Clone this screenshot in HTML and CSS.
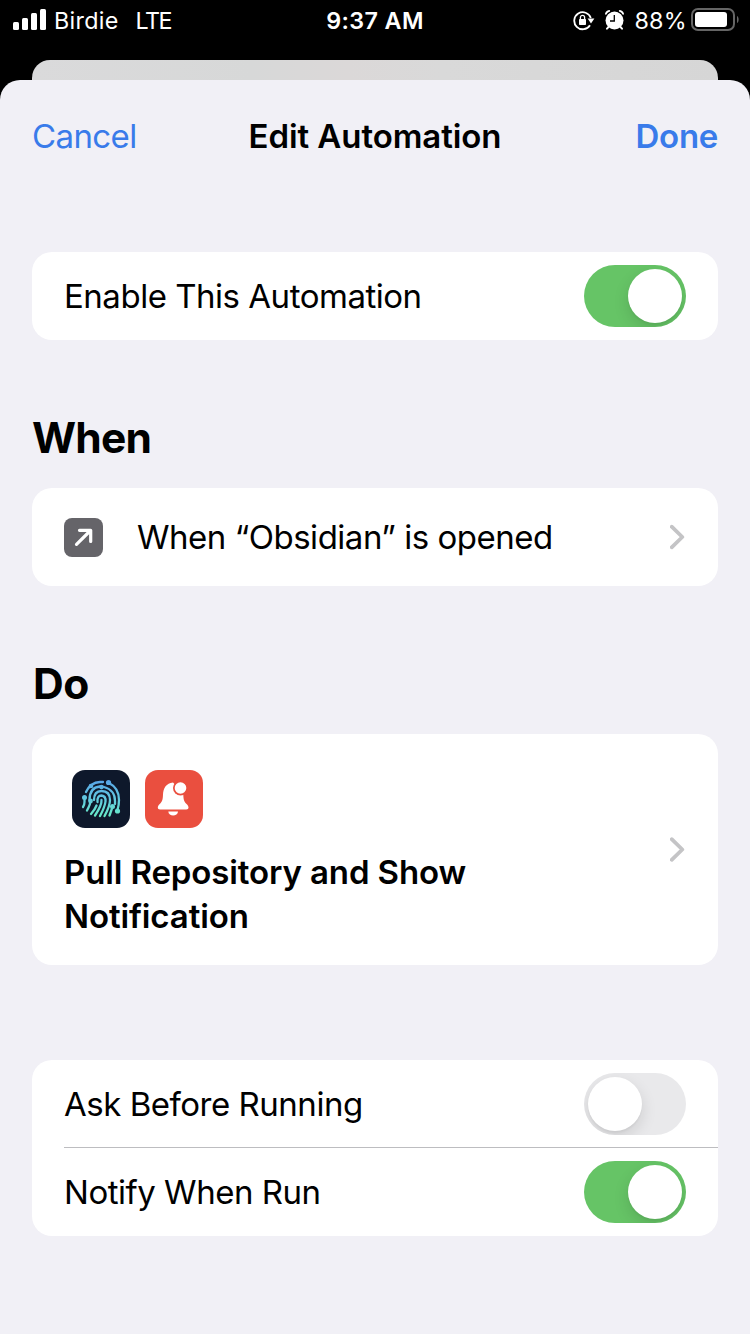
FILE: index.html
```html
<!DOCTYPE html>
<html lang="en">
<head>
<meta charset="utf-8">
<title>Edit Automation</title>
<link rel="stylesheet" href="styles.css">
</head>
<body>
<div class="status">
  <div class="status-left">
    <svg class="signal" width="34" height="22" viewBox="0 0 34 22" fill="#fff"><rect x="0" y="13" width="6" height="8" rx="1.5"/><rect x="9" y="9" width="6" height="12" rx="1.5"/><rect x="18" y="4" width="6" height="17" rx="1.5"/><rect x="27" y="0" width="6" height="21" rx="1.5"/></svg>
    <span class="carrier">Birdie</span><span class="network">LTE</span>
  </div>
  <div class="time">9:37 AM</div>
  <div class="status-right">
    <svg class="lock" width="22" height="22" viewBox="0 0 22 22"><path d="M17 15.200A8.500 8.500 0 1 1 17.800 8" fill="none" stroke="#fff" stroke-width="1.800"/><path d="M14.600 8.500h6.800l-3.400 4.900z" fill="#fff"/><rect x="6" y="9" width="7" height="6" rx=".8" fill="#fff"/><path d="M7.400 9.500V7.400a2.100 2.100 0 0 1 4.200 0v2.100" fill="none" stroke="#fff" stroke-width="1.300"/></svg>
    <svg class="alarm" width="20" height="20" viewBox="0 0 20 20"><circle cx="9.500" cy="10.500" r="9" fill="#fff"/><path d="M1 3.800Q1.600 1.400 4.200 1M18 3.800Q17.400 1.400 14.800 1M3.500 17L2 18.700M15.500 17l1.500 1.700" fill="none" stroke="#fff" stroke-width="1.900" stroke-linecap="round"/><path d="M.8 6.200Q2.800 2.700 6.400 1.300M18.200 6.200Q16.200 2.700 12.600 1.300" fill="none" stroke="#000" stroke-width=".9"/><path d="M9.300 5v6H5" fill="none" stroke="#000" stroke-width="1.300"/></svg>
    <span class="percent">88%</span>
    <svg class="battery" width="49" height="24" viewBox="0 0 49 24"><rect x="1" y="1" width="42" height="21" rx="6" fill="none" stroke="#656565" stroke-width="2"/><rect x="4" y="4" width="32" height="15" rx="3" fill="#fff"/><path d="M46 8c2.200 1 2.200 6 0 7z" fill="#656565"/></svg>
  </div>
</div>
<div class="back-sheet"></div>
<main class="sheet">
  <header class="nav">
    <span class="cancel">Cancel</span><h1 class="title">Edit Automation</h1><span class="done">Done</span>
  </header>
  <section class="card row enable">
    <span class="label l-enable">Enable This Automation</span><span class="toggle on"></span>
  </section>
  <h2 class="heading h-when">When</h2>
  <section class="card row when">
    <svg class="open-icon" width="39" height="39" viewBox="0 0 39 39"><rect width="39" height="39" rx="8" fill="#656469"/><path d="M12.500 26.300L26.500 12.500M15.500 12.300h11.200V23.500" fill="none" stroke="#fff" stroke-width="3.200" stroke-linecap="round" stroke-linejoin="round"/></svg>
    <span class="label l-when">When “Obsidian” is opened</span>
    <svg class="chevron" width="16" height="26" viewBox="0 0 16 26"><path d="M1.700 2.700L12.300 13 1.700 23.300" fill="none" stroke="#c4c4c6" stroke-width="3.800" stroke-linecap="round" stroke-linejoin="round"/></svg>
  </section>
  <h2 class="heading h-do">Do</h2>
  <section class="card row do">
    <div class="actions">
      <div class="apps">
        <svg width="58" height="58" viewBox="0 0 58 58">
          <defs><linearGradient id="print" gradientUnits="userSpaceOnUse" x1="0" y1="10" x2="0" y2="48"><stop offset="0" stop-color="#58a4e8"/><stop offset=".5" stop-color="#62c9df"/><stop offset="1" stop-color="#68edc5"/></linearGradient></defs>
          <rect width="58" height="58" rx="13" fill="#0e182b"/>
          <g fill="none" stroke="url(#print)" stroke-width="2.300" stroke-linecap="round" stroke-linejoin="round">
            <path d="M14 22Q18.500 12.500 28 12h3"/><path d="M12.500 28v4q0 3-1.500 5"/>
            <path d="M37 13q10 5 10 17 0 5-1.500 10"/>
            <path d="M17.500 30q0-12.500 10.500-13.500"/><path d="M32 17q11 3 11 14v3"/>
            <path d="M18.500 31q0 3-3.500 9.500"/>
            <path d="M22 30q0-9 7.500-9 8.500 0 8.500 9 0 6-5.500 16"/>
            <path d="M25.500 32q-.5-6.500 4-6.500 4.500.5 4 6-.5 5-5.500 14.500"/>
            <path d="M29.500 30q.5 5-6.500 15.500"/><path d="M24.500 35.500q-1.500 4-5.500 8.500"/><path d="M40.500 37l-3 8.500"/>
          </g>
          <g fill="url(#print)"><circle cx="36.500" cy="12.500" r="2.600"/><circle cx="12.500" cy="27.500" r="2.500"/><circle cx="19" cy="16" r="2.300"/><circle cx="18.500" cy="31" r="2.400"/><circle cx="29.500" cy="17" r="2.300"/><circle cx="45.500" cy="41" r="2.600"/><circle cx="40.500" cy="36.500" r="2.500"/></g>
        </svg>
        <svg width="58" height="58" viewBox="0 0 58 58"><rect width="58" height="58" rx="13" fill="#ea4f3f"/><path d="M28 12.500c-6.700.8-9.700 5.500-10 12-.2 5.500-.8 7-3 9.200-1.600 1.600-2.200 2.700-2.200 3.800 0 1.300.8 2 2.200 2h26.300c1.400 0 2.200-.7 2.200-2 0-1.100-.6-2.200-2.200-3.800-2.200-2.200-2.800-3.700-3-9.200v-1Z" fill="#fff"/><circle cx="35.500" cy="18" r="7.500" fill="#ea4f3f"/><circle cx="35.500" cy="18" r="5.800" fill="#fff"/><path d="M23.300 41.500h9.700c-.2 5.400-9.500 5.400-9.700 0z" fill="#fff"/></svg>
      </div>
      <p class="summary"><span class="sum-a">Pull Repository and Show</span><br><span class="sum-b">Notification</span></p>
    </div>
    <svg class="chevron" width="16" height="26" viewBox="0 0 16 26"><path d="M1.700 2.200L12.300 12.500 1.700 22.800" fill="none" stroke="#c4c4c6" stroke-width="3.800" stroke-linecap="round" stroke-linejoin="round"/></svg>
  </section>
  <section class="card options">
    <div class="row option"><span class="label l-ask">Ask Before Running</span><span class="toggle"></span></div>
    <div class="divider"></div>
    <div class="row option"><span class="label l-notify">Notify When Run</span><span class="toggle on"></span></div>
  </section>
</main>
</body>
</html>
```
FILE: styles.css
```css
* { box-sizing: border-box; }
body { margin: 0; width: 750px; height: 1334px; overflow: hidden; background: #000; color: #000; font-family: Inter, "Liberation Sans", sans-serif; font-size: 33px; display: flex; flex-direction: column; }
h1, h2, p { margin: 0; }
svg { display: block; flex: none; }
.status { height: 60px; flex: none; display: grid; grid-template-columns: 1fr auto 1fr; color: #fff; font-size: 23.3px; line-height: 42px; white-space: nowrap; }
.status-left { display: flex; padding-left: 13px; }
.signal { margin-top: 9px; }
.carrier { margin-left: 7px; letter-spacing: .3px; }
.network { margin-left: 17px; letter-spacing: -1.5px; }
.time { font-weight: 600; letter-spacing: .4px; }
.status-right { display: flex; justify-content: flex-end; padding-right: 10px; }
.lock { margin-top: 10px; }
.alarm { margin: 10px 0 0 10px; }
.percent { margin-left: 9px; letter-spacing: .3px; }
.battery { margin: 8px 0 0 4px; }
.back-sheet { height: 20px; flex: none; margin: 0 32px; border-radius: 18px 18px 0 0; background: linear-gradient(90deg, #dadadb, #d7d8d8 32%, #dbd8d8 46%, #d9d9d9 60%, #d6d6d6); }
.sheet { flex: 1; padding: 0 32px; background: #f1f0f6; border-radius: 20px 20px 0 0; }
.nav { height: 112px; display: grid; grid-template-columns: 1fr auto 1fr; line-height: 40px; padding-top: 36px; white-space: nowrap; }
.title { font-size: 33px; font-weight: 600; letter-spacing: -.08px; }
.cancel, .done { color: #397bea; }
.cancel { letter-spacing: -.6px; }
.done { font-weight: 600; text-align: right; letter-spacing: -.3px; }
.card { background: #fff; border-radius: 20px; }
.row { display: flex; align-items: center; justify-content: space-between; padding: 0 32px; }
.label { white-space: nowrap; line-height: 40px; letter-spacing: -.48px; }
.enable { margin-top: 60px; height: 88px; }
.toggle { flex: none; width: 102px; height: 62px; padding: 4px; border-radius: 31px; background: #e9e9eb; display: flex; overflow: hidden; }
.toggle::before { content: ""; width: 54px; height: 54px; border-radius: 50%; background: #fff; box-shadow: 0 6px 16px rgba(0,0,0,.12), 0 2px 2px rgba(0,0,0,.04); }
.toggle.on { background: #66c466; justify-content: flex-end; }
.heading { font-size: 42.5px; font-weight: 700; line-height: 52px; letter-spacing: -.8px; }
.h-when { margin-top: 72px; }
.when { margin-top: 24px; height: 98px; justify-content: flex-start; }
.l-when { margin-left: 34px; }
.when .chevron { margin-left: auto; }
.h-do { margin-top: 72px; padding-left: 1px; letter-spacing: -.5px; }
.do { margin-top: 24px; height: 231px; }
.actions { align-self: flex-start; padding-top: 36px; }
.apps { display: flex; gap: 15px; padding-left: 8px; }
.summary { margin-top: 22px; font-weight: 600; line-height: 44px; white-space: nowrap; letter-spacing: -.12px; }
.options { margin-top: 95px; height: 176px; }
.option { height: 87px; }
.divider { height: 1px; margin-left: 32px; background: #bdbdc0; }
.option:last-child { height: 88px; }
```
